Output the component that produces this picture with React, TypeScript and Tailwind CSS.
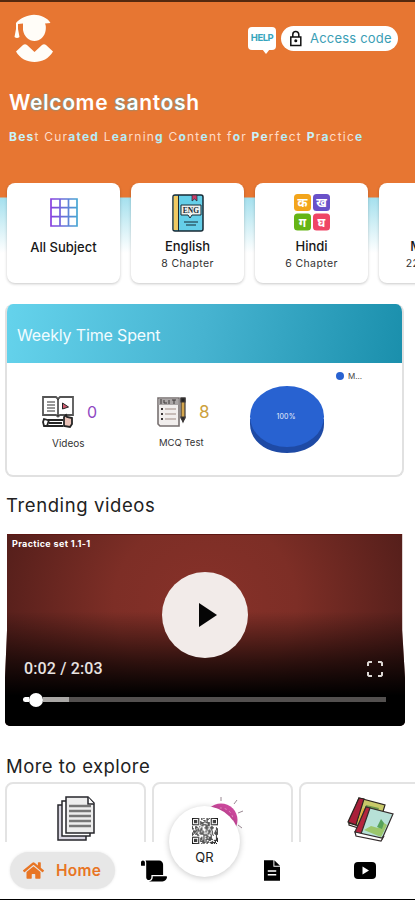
import { ReactNode } from 'react';
import { FaHome, FaScroll } from 'react-icons/fa';

interface SubjectProps {
  name: string;
  chapters?: string;
  icon: ReactNode;
}

function LogoIcon() {
  return (
    <svg width="40" height="50" viewBox="0 0 40 50" fill="#fffdf8">
      <path d="M2 9C5 5 14 .8 20 .8S34 4 36.500 9L31 9.500c1 2 1 4 .7 6.500C31 22.500 26 27 20.500 27S10 22.500 9 16V9.500L4 10v7H2z" />
      <path d="M2 15h2l1.500 8q-2.500 2-5 0z" />
      <path d="M2 37.500 9 31q2-1.500 4 0l7.500 7 7.500-7q2-1.500 4 0l7 6.500C35 44.500 28 48 20.500 48S6 44.500 2 37.500z" />
    </svg>
  );
}

function LockIcon() {
  return (
    <svg width="14" height="17" viewBox="0 0 14 17" fill="none" stroke="#111" strokeWidth="1.500">
      <rect x="1.800" y="7" width="10" height="8.500" />
      <path d="M3.800 7V4.500a3 3 0 0 1 6 0V7" />
      <circle cx="6.800" cy="10.800" r=".8" fill="#111" />
    </svg>
  );
}

function GridIcon() {
  return (
    <svg width="28" height="29" viewBox="0 0 28 29">
      <defs>
        <linearGradient id="grid" x1="0" x2="28" y1="0" y2="0" gradientUnits="userSpaceOnUse">
          <stop stopColor="#8a3ce0" />
          <stop offset="1" stopColor="#45a9d2" />
        </linearGradient>
      </defs>
      <path
        d="M1 1h26v27H1zM10 1v27M18.500 1v27M1 9.700h26M1 18.700h26"
        fill="none"
        stroke="url(#grid)"
        strokeWidth="1.700"
      />
    </svg>
  );
}

function EnglishBookIcon() {
  return (
    <svg width="32" height="38" viewBox="0 0 32 38">
      <rect x="1" y="1" width="30" height="36" rx="2" fill="#65cfe9" stroke="#172a35" strokeWidth="1.500" />
      <path d="M1.700 2h4.500v34H1.700z" fill="#f0ca63" />
      <path d="M6.500 1v36" stroke="#172a35" />
      <path d="M20 1h5v6l-2.500-2L20 7z" fill="#c63d67" stroke="#172a35" strokeWidth=".7" />
      <path d="M9 11h20v10H20l-2 3-2-3H9z" fill="#eef1ee" stroke="#172a35" />
      <text x="19" y="19" textAnchor="middle" fontSize="7.500" fontWeight="bold" fill="#172a35" fontFamily="Liberation Serif, serif">
        ENG
      </text>
      <path d="M12 28h14M14 31h10" stroke="#172a35" strokeWidth="1.200" />
    </svg>
  );
}

const hindiTiles = [
  { char: 'क', x: 0, y: 0, fill: '#f3a51b' },
  { char: 'ख', x: 19, y: 0, fill: '#6951c9' },
  { char: 'ग', x: 0, y: 19.5, fill: '#66b516' },
  { char: 'घ', x: 19, y: 19.5, fill: '#ef4565' },
];

function HindiIcon() {
  return (
    <svg width="36" height="37" viewBox="0 0 36 37">
      {hindiTiles.map((t) => (
        <g key={t.char}>
          <rect x={t.x} y={t.y} width="17" height="17" rx="3.500" fill={t.fill} />
          <text x={t.x + 8.5} y={t.y + 13} textAnchor="middle" fontSize="12" fontWeight="bold" fill="#fff" fontFamily="Noto Sans, sans-serif">
            {t.char}
          </text>
        </g>
      ))}
    </svg>
  );
}

function VideoLessonIcon() {
  return (
    <svg width="33" height="32" viewBox="0 0 33 32" fill="none" stroke="#252525" strokeWidth="1.400">
      <path d="M1 1h13l2 2 2-2h13v18H18l-2 1.500L14 19H1z" stroke="#555" strokeWidth="1.800" />
      <path d="M16 3v17" />
      <path d="M5 6h8M5 9h8M5 12h8M5 15h8" strokeWidth="1.700" stroke="#777" />
      <path d="m20.500 7 6 4-6 2z" fill="#d25c70" strokeWidth="1" />
      <path d="M21 24H6l-4-1-1 3 1 4h19M7 24l-2 6M7 27h13" strokeWidth="1.800" />
      <path d="M22 30v-9l2-2 1 2 5 1v6l-2 3z" fill="#e9c2b8" strokeWidth="1.800" />
    </svg>
  );
}

function TestIcon() {
  return (
    <svg width="30" height="31" viewBox="0 0 30 31" fill="none" stroke="#3c3838" strokeWidth="1.200">
      <path d="M1 1h21v28H3L1 27z" fill="#f1eeed" stroke="#777070" strokeWidth="1.600" />
      <path d="M1.500 2h20v6h-20z" fill="#aaa6a6" stroke="none" />
      <path d="M4 2v5M7 3v3h3M12 3v4M15 3h4M17 3v4" strokeWidth="1" />
      <path d="M4 12h2M4 17h2M4 22h2" strokeWidth="2.200" />
      <path d="M8 12h11M8 17h11M8 22h11" stroke="#9d8984" />
      <path d="M24 4V1h4v20l-2 3-2-3z" fill="#d4a64d" />
      <path d="M24 1h4v4h-4zM24 20h4l-2 5z" fill="#242424" />
    </svg>
  );
}

function PieChart() {
  return (
    <svg width="76" height="71" viewBox="0 0 76 71">
      <path d="M1 34v5c0 17 16 29 37 29s37-12 37-29v-5z" fill="#1e4aa5" />
      <ellipse cx="38" cy="31.500" rx="37" ry="30.500" fill="#2862d1" />
      <text x="37" y="34" textAnchor="middle" fontSize="7" fill="#e7effb" textLength="19" fontFamily="Inter, sans-serif">
        100%
      </text>
    </svg>
  );
}

function PapersIcon() {
  return (
    <svg width="40" height="46" viewBox="0 0 40 46" fill="#fff" stroke="#26262b" strokeWidth="1.500">
      <path d="M2 9v35h28V9z" fill="#d9d6e2" />
      <path d="M6 5v35h28V5z" />
      <path d="M10 1h22l6 6v30H10z" fill="#eee" />
      <path d="M32 1v7h6" />
      <path d="M13 10h22M13 15h22M13 20h22M13 25h22M13 30h22" stroke="#777" strokeWidth="2.600" />
    </svg>
  );
}

function BooksIcon() {
  return (
    <svg width="48" height="46" viewBox="0 0 48 46" strokeWidth="1.200">
      <g stroke="#2c2520">
        <path d="M13 2 39 9 31 35 3 27z" fill="#c8c969" />
        <path d="m13 2 5 1-8 26-8-3z" fill="#a91f39" />
        <path d="m20 9 13 3-5 12-12 5z" fill="#6b9549" stroke="none" />
        <path d="m17 12 5 3-5 12-5-2z" fill="#e7aa36" stroke="none" />
        <path d="M3 26v3l28 9" fill="none" />
      </g>
      <g stroke="#342c2c">
        <path d="m20 11 27 7-11 25-26-6z" fill="#b7e1d7" />
        <path d="m20 11 4 1-9 26-6-2z" fill="#b5253e" />
        <path d="m18 34 7-4 7 2 6-5 3 2-6 12z" fill="#9bc66b" stroke="none" />
        <path d="m35 23 3 4-2 6-5-2z" fill="#57a35a" stroke="none" />
        <path d="m9 36 1 4 25 5 3-5-2 2z" fill="#fff" />
      </g>
    </svg>
  );
}

function BulbIcon() {
  return (
    <svg width="40" height="50" viewBox="0 0 40 50">
      <circle cx="18" cy="24" r="16.500" fill="#ca489b" />
      <circle cx="18" cy="24" r="12" fill="none" stroke="#e997c6" strokeDasharray="2 3" />
      <path d="M18 5V1M31 8l3-4M35 17l5-2M35 29l4 3" stroke="#806b77" strokeWidth=".8" />
    </svg>
  );
}

const QR_SIZE = 25;

function isDark(x: number, y: number) {
  const corners = [[0, 0], [QR_SIZE - 7, 0], [0, QR_SIZE - 7]];
  for (const [cx, cy] of corners) {
    const dx = x - cx;
    const dy = y - cy;
    if (dx >= -1 && dx <= 7 && dy >= -1 && dy <= 7) {
      const ring = Math.max(Math.abs(dx - 3), Math.abs(dy - 3));
      return ring === 3 || ring <= 1;
    }
  }
  return (x * 17 + y * 31 + x * y * 7 + ((x * x) ^ (y * 5))) % 7 < 4;
}

function QrCode() {
  const cells = [];
  for (let y = 0; y < QR_SIZE; y++) {
    for (let x = 0; x < QR_SIZE; x++) {
      if (isDark(x, y)) cells.push(<rect key={`${x}-${y}`} x={x} y={y} width="1" height="1" />);
    }
  }
  return (
    <svg width="26" height="26" viewBox="0 0 25 25" fill="#171717">
      {cells}
    </svg>
  );
}

function SubjectCard({ name, chapters, icon }: SubjectProps) {
  return (
    <div className="flex h-[100px] w-[113px] shrink-0 flex-col items-center rounded-lg bg-white pt-[10px] shadow-[0_1px_3px_rgba(0,0,0,0.22)]">
      <div className="flex h-[39px] items-center">{icon}</div>
      <p className={`whitespace-nowrap text-[13px] leading-[18px] font-medium text-[#171717] ${chapters ? 'mt-[5px]' : 'mt-[6px]'}`}>{name}</p>
      {chapters && <p className="text-[10.5px] leading-[17px] tracking-[0.4px] text-[#333] whitespace-nowrap">{chapters}</p>}
    </div>
  );
}

function Header() {
  return (
    <header className="h-[183px] border-t-2 border-[#54290f] pl-[9px]">
      <div className="flex h-[74px] items-start justify-between pl-[5px] pr-[17px] pt-3">
        <LogoIcon />
        <div className="flex items-center gap-[5px] pt-3">
          <div className="relative flex h-[23px] w-[28px] items-center justify-center rounded-[4px] bg-white text-[9.5px] font-bold tracking-[-0.5px] text-[#38a5bd]">
            HELP
            <span className="absolute -bottom-1 left-[14px] border-x-4 border-t-5 border-x-transparent border-t-white" />
          </div>
          <div className="flex h-[25px] w-[117px] items-center rounded-full bg-white pl-2 text-[13px] text-[#3a9eb5]">
            <LockIcon />
            <span className="ml-[7px] whitespace-nowrap tracking-[0.2px]">Access code</span>
          </div>
        </div>
      </div>
      <h1 className="mt-[13px] whitespace-nowrap text-[21px] leading-7 font-semibold tracking-[0.66px] text-white">
        W<span className="[text-shadow:0_0_2px_#16b4dd]">elco</span>me <span className="[text-shadow:0_0_2px_#16b4dd]">sa</span>nt
        <span className="[text-shadow:0_0_2px_#16b4dd]">os</span>h
      </h1>
      <p className="mt-[10px] whitespace-nowrap text-[12px] leading-5 tracking-[1.22px] text-[#ffdcc8]">
        <b className="text-[#c9f3fa]">Bes</b>t Cur<b className="text-[#b5edf7]">ated</b> L<b className="text-[#b5edf7]">ea</b>rnin
        <b className="text-[#b5edf7]">g</b> C<b className="text-[#b5edf7]">o</b>nt<b className="text-[#b5edf7]">e</b>nt f
        <b className="text-[#b5edf7]">o</b>r <b className="text-[#c9f3fa]">Pe</b>rf<b className="text-[#b5edf7]">e</b>ct{' '}
        <b className="text-[#c9f3fa]">P</b>r<b className="text-[#b5edf7]">a</b>ctic<b className="text-[#b5edf7]">e</b>
      </p>
    </header>
  );
}

function WeeklySummary() {
  return (
    <section className="mt-[17px] mr-[11px] ml-[5px] h-[173px] overflow-hidden rounded-lg border-2 border-t-0 border-[#e1e1e1]">
      <h2 className="-mx-px h-[59px] bg-linear-[100deg,#65d3ec_0%,#46b3d0_50%,#1a8fac_100%] pl-[11px] text-[16px] leading-[62px] text-[#f1fcff]">
        <span className="tracking-[-0.15px]">Weekly Time Spent</span>
      </h2>
      <div className="flex">
        <div className="w-[116px] pl-[35px] pt-[33px]">
          <div className="flex items-center gap-3">
            <VideoLessonIcon />
            <span className="text-[16px] text-[#9048c2]">0</span>
          </div>
          <p className="mt-[7px] pl-[10px] text-[10px] leading-4 text-[#333]">Videos</p>
        </div>
        <div className="w-[126px] pl-[34px] pt-[33px]">
          <div className="flex items-center gap-3">
            <TestIcon />
            <span className="text-[17px] leading-8 text-[#cda13d]">8</span>
          </div>
          <p className="mt-[7px] pl-[2px] text-[9.5px] leading-4 whitespace-nowrap text-[#333]">MCQ Test</p>
        </div>
        <div className="pt-[22px]">
          <PieChart />
        </div>
        <div className="ml-[11px] mt-[7px] flex h-3 items-center gap-1 text-[8px] text-[#444]">
          <span className="size-2 rounded-full bg-[#2862d1]" />
          M...
        </div>
      </div>
    </section>
  );
}

function VideoPlayer() {
  return (
    <section className="relative mt-[14px] ml-[5px] flex h-[192px] w-[400px] flex-col overflow-hidden rounded-b-[5px] border-t border-[#5d1612] bg-[linear-gradient(to_bottom,transparent_40%,rgba(0,0,0,0.62)_66%,#000_84%),radial-gradient(ellipse_240px_220px_at_50%_35%,#873129_0%,#7d2e26_38%,#4b1b18_100%)] [clip-path:polygon(0.5%_0,99.3%_0,99.3%_50%,100%_75%,100%_100%,0_100%,0_75%,0.5%_50%)]">
      <p className="pl-[7px] pt-[3px] text-[9px] leading-3 font-bold tracking-[0.35px] text-white">Practice set 1.1-1</p>
      <button className="absolute top-[37px] left-[157px] flex size-[86px] items-center justify-center rounded-full bg-[#f2ebe9]">
        <svg className="ml-[5px]" width="20" height="26" viewBox="0 0 20 26">
          <path d="M1 1v24l18-12z" fill="#050505" />
        </svg>
      </button>
      <div className="mt-[107px] flex items-center justify-between pr-[22px] pl-[19px]">
        <span className="text-[16px] leading-6 font-medium tracking-[0.15px] font-[Roboto,sans-serif] text-[#e8e3e1]">0:02 / 2:03</span>
        <svg width="16" height="16" viewBox="0 0 16 16" fill="none" stroke="#ddd8d5" strokeWidth="2">
          <path d="M1 5V2l1-1h3M11 1h3l1 1v3M15 11v3l-1 1h-3M5 15H2l-1-1v-3" />
        </svg>
      </div>
      <div className="mt-[11px] ml-[18px] flex h-[15px] w-[363px] items-center">
        <span className="h-[5px] w-[6px] rounded-l-full bg-white" />
        <span className="size-[14px] shrink-0 rounded-full bg-white" />
        <span className="h-[5px] w-[26px] bg-[#aaa8a6]" />
        <span className="h-[5px] grow bg-[#53504f]" />
      </div>
    </section>
  );
}

function ExploreCard({ children }: { children?: ReactNode }) {
  return (
    <div className="flex h-[80px] w-[141px] shrink-0 justify-center rounded-lg border-2 border-[#e3e3e3] bg-white pt-3">
      {children}
    </div>
  );
}

function BottomNav() {
  return (
    <nav className="relative flex h-[58px] shrink-0 items-center border-b border-black bg-white pl-[10px]">
      <div className="flex h-[37px] w-[105px] items-center rounded-full bg-[#e7e7e7] pl-[13px] text-[#e87524] shadow-[0_0_3px_#e7e7e7]">
        <FaHome size={21} />
        <span className="ml-[12px] text-[15.500px] font-semibold tracking-[0.3px]">Home</span>
      </div>
      <FaScroll size={26} className="ml-[26px] text-black" />
      <div className="absolute -top-9 left-[169px] flex size-[71px] flex-col items-center rounded-full bg-white pt-3 shadow-[0_1px_6px_rgba(0,0,0,0.22)]">
        <QrCode />
        <span className="mt-[4px] text-[13px] leading-[18px] text-[#222]">QR</span>
      </div>
      <svg className="ml-[97px]" width="16" height="21" viewBox="0 0 17 22">
        <path d="M0 0h10v7h7v15H0z" />
        <path d="M11 0v6h6z" />
        <path d="M4 11.500h9M4 15.500h9" stroke="#fff" strokeWidth="1.600" />
      </svg>
      <svg className="ml-[74px]" width="22" height="17" viewBox="0 0 22 17">
        <rect width="22" height="17" rx="4" />
        <path d="m8.500 4.500 6.500 4-6.500 4z" fill="#fff" />
      </svg>
    </nav>
  );
}

export default function App() {
  return (
    <main className="flex h-[900px] w-[415px] flex-col overflow-hidden bg-white font-[Inter,'Noto_Sans',sans-serif]">
      <div className="shrink-0 bg-[linear-gradient(to_bottom,#e77632_197px,#a5e0ee_198px,#cdeef5_222px,#fff_253px)]">
        <Header />
        <div className="flex gap-[11px] overflow-hidden pb-[4px] pl-[7px]">
          <SubjectCard name="All Subject" icon={<GridIcon />} />
          <SubjectCard name="English" chapters="8 Chapter" icon={<EnglishBookIcon />} />
          <SubjectCard name="Hindi" chapters="6 Chapter" icon={<HindiIcon />} />
          <SubjectCard name="Maths B" chapters="22 Chapter" icon={null} />
        </div>
      </div>
      <div className="min-h-0 grow overflow-hidden">
        <WeeklySummary />
        <h2 className="mt-[13px] pl-[6px] text-[18.500px] leading-[30px] tracking-[0.6px] text-[#222]">Trending videos</h2>
        <VideoPlayer />
        <h2 className="mt-[25px] pl-[6px] text-[18.500px] leading-[30px] tracking-[0.45px] text-[#222]">More to explore</h2>
        <div className="mt-[1px] flex gap-[6px] pl-[5px]">
          <ExploreCard>
            <PapersIcon />
          </ExploreCard>
          <ExploreCard>
            <BulbIcon />
          </ExploreCard>
          <ExploreCard>
            <BooksIcon />
          </ExploreCard>
        </div>
      </div>
      <BottomNav />
    </main>
  );
}
